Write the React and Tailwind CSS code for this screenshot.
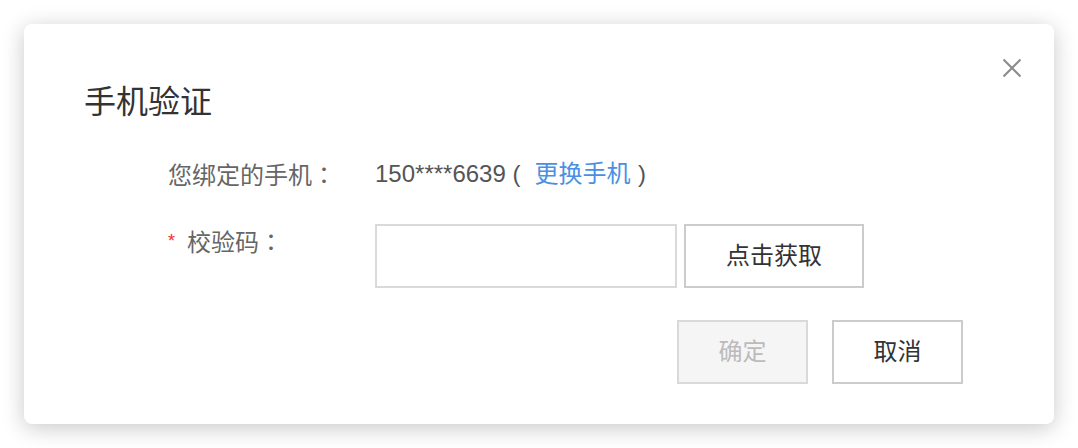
export default function App() {
  const font = { fontFamily: '"Liberation Sans", "Noto Sans CJK SC", sans-serif' };
  const colon = { fontFamily: '"Noto Sans CJK JP", sans-serif' };
  return (
    <div className="w-[1078px] h-[448px] bg-white p-[24px]" style={font}>
      <div className="relative w-[1030px] h-[400px] bg-white rounded-[8px] shadow-[0_4px_22px_rgba(0,0,0,0.22)] pl-[60px] pt-[54px]">
        <button className="absolute top-[34px] right-[32px] w-[20px] h-[20px]" aria-label="close">
          <svg width="20" height="20" viewBox="0 0 20 20">
            <path d="M1.5 1.5 L18.5 18.5 M18.5 1.5 L1.5 18.5" stroke="#8a8a8a" strokeWidth="2" fill="none" />
          </svg>
        </button>
        <h2 className="text-[32px] leading-[48px] text-[#333]">手机验证</h2>
        <div className="pl-[84px] pt-[32px] text-[24px] leading-[32px]">
          <div className="flex">
            <div className="w-[207px] text-[#666]">
              您绑定的手机<span style={colon}>：</span>
            </div>
            <div className="text-[#555]">
              150****6639 (<span className="ml-[14px] mr-[1px] text-[#4a90e2]">更换手机</span> )
            </div>
          </div>
          <div className="flex items-start mt-[32px]">
            <div className="w-[207px] text-[#666] pt-[1px]">
              <span className="inline-block w-[19px] text-[#f0302a] text-[18px] align-top">*</span>校验码<span style={colon}>：</span>
            </div>
            <input className="w-[302px] h-[64px] border-2 border-[#d9d9d9] outline-none px-3" />
            <button className="ml-[7px] w-[180px] h-[64px] border-2 border-[#cccccc] bg-white text-[#333]">点击获取</button>
          </div>
          <div className="flex mt-[32px] pl-[509px] gap-[24px]">
            <button className="w-[131px] h-[64px] border-2 border-[#d9d9d9] bg-[#f5f5f5] text-[#bbbbbb]">确定</button>
            <button className="w-[131px] h-[64px] border-2 border-[#cccccc] bg-white text-[#333]">取消</button>
          </div>
        </div>
      </div>
    </div>
  );
}
